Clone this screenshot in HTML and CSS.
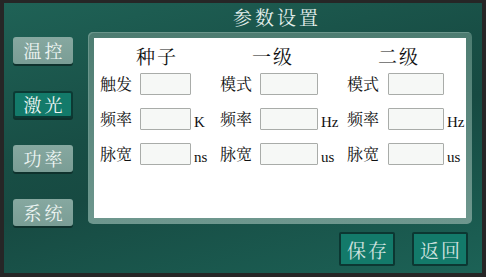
FILE: index.html
```html
<!DOCTYPE html>
<html lang="zh">
<head>
<meta charset="utf-8">
<title>参数设置</title>
<link rel="stylesheet" href="styles.css">
</head>
<body>
<div class="screen">
  <nav class="side">
    <button class="nav-btn">温控</button>
    <button class="nav-btn active">激光</button>
    <button class="nav-btn">功率</button>
    <button class="nav-btn">系统</button>
  </nav>
  <main class="main">
    <h1 class="title">参数设置</h1>
    <section class="frame">
      <div class="sheet">
        <div class="head h1">种子</div>
        <div class="head h2">一级</div>
        <div class="head h3">二级</div>

        <span class="lbl">触发</span><input class="box w1" type="text"><span class="unit"></span>
        <span class="lbl">模式</span><input class="box w2" type="text"><span class="unit"></span>
        <span class="lbl">模式</span><input class="box w3" type="text"><span class="unit"></span>

        <span class="lbl">频率</span><input class="box w1" type="text"><span class="unit">K</span>
        <span class="lbl">频率</span><input class="box w2" type="text"><span class="unit">Hz</span>
        <span class="lbl">频率</span><input class="box w3" type="text"><span class="unit">Hz</span>

        <span class="lbl">脉宽</span><input class="box w1" type="text"><span class="unit">ns</span>
        <span class="lbl">脉宽</span><input class="box w2" type="text"><span class="unit">us</span>
        <span class="lbl">脉宽</span><input class="box w3" type="text"><span class="unit">us</span>
      </div>
    </section>
    <div class="actions">
      <button class="act-btn">保存</button>
      <button class="act-btn">返回</button>
    </div>
  </main>
</div>
</body>
</html>
```
FILE: styles.css
```css
html, body {
  margin: 0;
  padding: 0;
}
body {
  width: 486px;
  height: 277px;
  background: #262626;
  overflow: hidden;
  font-family: "Noto Serif CJK SC", "Noto Sans CJK SC", sans-serif;
}
.screen {
  margin: 3px 4px 4px 4px;
  width: 478px;
  height: 270px;
  display: flex;
  background: linear-gradient(165deg, #1f6256 0%, #184e45 40%, #174a42 55%, #1c6256 100%);
}
.side {
  width: 84px;
  box-sizing: border-box;
  padding: 34px 0 0 9px;
  display: flex;
  flex-direction: column;
  gap: 27px;
}
.nav-btn {
  width: 60px;
  height: 27px;
  box-sizing: border-box;
  border: none;
  border-radius: 3px;
  background: linear-gradient(#86a8a0, #7a9d95);
  box-shadow: 0 2px 0 #0f322d;
  color: #eef5f3;
  font-family: inherit;
  font-size: 18px;
  letter-spacing: 3px;
  text-indent: 3px;
  line-height: 27px;
  padding: 0;
  cursor: pointer;
}
.nav-btn.active {
  background: #137a6a;
  border: 2px solid #0c3a34;
  line-height: 23px;
  box-shadow: 0 2px 0 #0f322d;
}
.main {
  width: 384px;
  display: flex;
  flex-direction: column;
}
.title {
  margin: 0;
  height: 29px;
  line-height: 28px;
  font-size: 19px;
  font-weight: normal;
  color: #e4efec;
  text-align: center;
  letter-spacing: 3px;
  padding-right: 6px;
}
.frame {
  height: 192px;
  box-sizing: border-box;
  padding: 6px;
  border-radius: 5px;
  background: linear-gradient(#4d7c71, #6e978e);
  box-shadow: inset 1px 1px 0 #6a958b;
}
.sheet {
  height: 180px;
  box-sizing: border-box;
  background: #ffffff;
  padding-left: 6px;
  display: grid;
  grid-template-columns: 40px 51px 29px 40px 58px 29px 41px 56px auto;
  grid-template-rows: 35px 35px 35px 35px;
  align-items: start;
  color: #111;
}
.head {
  font-size: 19px;
  line-height: 35px;
  letter-spacing: 2px;
  grid-column: span 3;
}
.h1 { padding-left: 36px; }
.h2 { padding-left: 32px; }
.h3 { padding-left: 31px; }
.lbl {
  font-size: 16px;
  line-height: 22px;
  height: 22px;
}
.box {
  height: 22px;
  box-sizing: border-box;
  border: 1px solid #a9aca9;
  border-radius: 1px;
  background: #f6f8f6;
  margin: 0;
  padding: 0;
}
.w1 { width: 51px; }
.w2 { width: 58px; }
.w3 { width: 56px; }
.unit {
  font-family: "Liberation Serif", serif;
  font-size: 15px;
  line-height: 22px;
  height: 22px;
  padding-left: 3px;
  padding-top: 3px;
}
.actions {
  display: flex;
  justify-content: flex-end;
  gap: 17px;
  padding-right: 4px;
  margin-top: 8px;
}
.act-btn {
  width: 56px;
  height: 34px;
  box-sizing: border-box;
  border: 2px solid #0c3732;
  border-radius: 2px;
  background: #137a6a;
  color: #d3e4e0;
  font-family: inherit;
  font-size: 19px;
  letter-spacing: 2px;
  text-indent: 2px;
  padding: 0;
  cursor: pointer;
}
```
